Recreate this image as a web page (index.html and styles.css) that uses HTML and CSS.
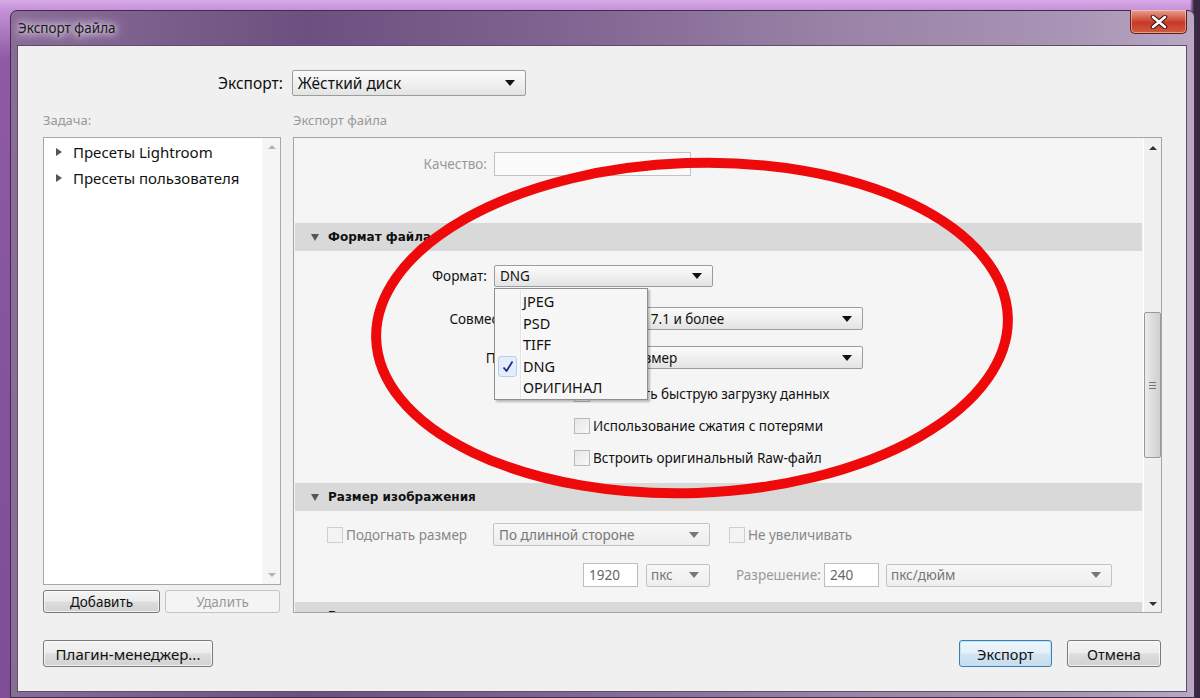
FILE: index.html
```html
<!DOCTYPE html>
<html lang="ru">
<head>
<meta charset="utf-8">
<title>Экспорт файла</title>
<link rel="stylesheet" href="styles.css">
</head>
<body>
<div class="desktop">
  <div class="window">
    <div class="titlebar">
      <span class="title">Экспорт файла</span>
      <div class="close">
        <svg width="20" height="14" viewBox="0 0 20 14"><path d="M4 2 L16 12 M16 2 L4 12" stroke="#3a1010" stroke-width="4.5" stroke-linecap="round"/><path d="M4 2 L16 12 M16 2 L4 12" stroke="#fff" stroke-width="2.6" stroke-linecap="round"/></svg>
      </div>
    </div>
    <div class="client">
      <div class="export-row">
        <span class="export-label">Экспорт:</span>
        <div class="select select-big"><span>Жёсткий диск</span><i class="caret"></i></div>
      </div>
      <div class="main">
        <div class="col-left">
          <div class="cap">Задача:</div>
          <div class="listbox">
            <ul class="tree">
              <li><i class="tri-right"></i>Пресеты Lightroom</li>
              <li><i class="tri-right"></i>Пресеты пользователя</li>
            </ul>
            <div class="vscroll vscroll-light">
              <i class="arr-up"></i>
              <i class="arr-down"></i>
            </div>
          </div>
          <div class="btn-row">
            <button class="btn btn-add">Добавить</button>
            <button class="btn btn-del" disabled>Удалить</button>
          </div>
        </div>
        <div class="col-right">
          <div class="cap">Экспорт файла</div>
          <div class="panel">
            <div class="panel-content">
              <div class="frow row-quality">
                <span class="flabel w192 dim">Качество:</span>
                <div class="input input-quality"></div>
              </div>
              <div class="band band-1"><i class="tri-down"></i>Формат файла</div>
              <div class="frow row-format">
                <span class="flabel w192">Формат:</span>
                <div class="select-wrap">
                  <div class="select select-format"><span>DNG</span><i class="caret"></i></div>
                  <div class="popup">
                    <div class="popup-gutter"></div>
                    <div class="pitem">JPEG</div>
                    <div class="pitem">PSD</div>
                    <div class="pitem">TIFF</div>
                    <div class="pitem checked">
                      <span class="checkbox-mark"><svg width="12" height="13" viewBox="0 0 12 13"><path d="M1.5 7.5 L4.5 11 L10.5 1.5" fill="none" stroke="#1e2a8c" stroke-width="1.8" stroke-linejoin="round"/></svg></span>DNG
                    </div>
                    <div class="pitem">ОРИГИНАЛ</div>
                  </div>
                </div>
              </div>
              <div class="frow row-compat">
                <span class="flabel w261">Совместимость:</span>
                <div class="select select-wide"><span>Camera Raw 7.1 и более</span><i class="caret"></i></div>
              </div>
              <div class="frow row-preview">
                <span class="flabel w261">Просмотр:</span>
                <div class="select select-wide"><span>Средний размер</span><i class="caret"></i></div>
              </div>
              <div class="checks">
                <label class="chk"><i class="box"></i>Включить быструю загрузку данных</label>
                <label class="chk"><i class="box"></i>Использование сжатия с потерями</label>
                <label class="chk"><i class="box"></i>Встроить оригинальный Raw-файл</label>
              </div>
              <div class="band band-2"><i class="tri-down"></i>Размер изображения</div>
              <div class="size-row1">
                <label class="chk chk-dim chk-fit"><i class="box"></i>Подогнать размер</label>
                <div class="select select-dis select-side"><span>По длинной стороне</span><i class="caret"></i></div>
                <label class="chk chk-dim chk-noup"><i class="box"></i>Не увеличивать</label>
              </div>
              <div class="size-row2">
                <div class="input input-num in-1920">1920</div>
                <div class="select select-dis select-px"><span>пкс</span><i class="caret"></i></div>
                <span class="res-label">Разрешение:</span>
                <div class="input input-num in-240">240</div>
                <div class="select select-dis select-ppi"><span>пкс/дюйм</span><i class="caret"></i></div>
              </div>
              <div class="band band-3"><i class="tri-down"></i>Р</div>
            </div>
            <div class="vscroll vscroll-main">
              <i class="arr-up dark"></i>
              <div class="thumb"><span class="grip"></span></div>
              <i class="arr-down dark"></i>
            </div>
          </div>
        </div>
      </div>
      <div class="footer">
        <button class="btn btn-plugin">Плагин-менеджер...</button>
        <div class="spacer"></div>
        <button class="btn btn-default">Экспорт</button>
        <button class="btn btn-cancel">Отмена</button>
      </div>
    </div>
  </div>
</div>
<svg class="annot" width="1200" height="698" viewBox="0 0 1200 698">
  <ellipse cx="692" cy="328" rx="316" ry="165" fill="none" stroke="#ee0a0a" stroke-width="10" transform="rotate(-2 692 328)"/>
</svg>
</body>
</html>
```
FILE: styles.css
```css
* { box-sizing: border-box; }
html, body { margin: 0; padding: 0; }
body {
  width: 1200px;
  height: 698px;
  overflow: hidden;
  position: relative;
  font-family: "Noto Sans", "Open Sans", sans-serif;
  font-size: 13px;
  color: #000;
}
.desktop {
  width: 1200px;
  height: 698px;
  padding: 10px 5px 0 10px;
  background:
    linear-gradient(90deg, rgba(0,0,0,0) 0, rgba(0,0,0,0) 1190px, #3a2843 1194px, #3a2843 1200px),
    linear-gradient(180deg, #d9a9e8 0, #c592d9 10px, #8d5aa3 60px, #7e4d95 100%);
}
.window {
  width: 1185px;
  height: 688px;
  border: 1px solid #3d2f45;
  border-radius: 7px 7px 0 0;
  background: linear-gradient(90deg, #8a6c98 0, #6e5080 25%, #7f6290 45%, #9a83a6 70%, #a995b5 90%, #b9a7c4 100%);
  padding: 0 7px 5px 6px;
  display: flex;
  flex-direction: column;
  position: relative;
}
.titlebar {
  height: 34px;
  display: flex;
  align-items: flex-start;
  position: relative;
}
.title {
  margin-top: 8px;
  margin-left: 0;
  font-family: "Noto Sans", sans-serif;
  font-size: 13.5px;
  color: #1a1a1a;
  padding: 0 6px 0 1px;
  text-shadow: 0 0 6px rgba(240,232,245,0.95), 0 0 10px rgba(240,232,245,0.9), 0 0 14px rgba(240,232,245,0.8);
}
.close {
  position: absolute;
  right: 0;
  top: -1px;
  width: 57px;
  height: 24px;
  border: 1px solid #5a2020;
  border-top: none;
  border-radius: 0 0 5px 5px;
  background: linear-gradient(180deg, #e8a090 0, #d5604c 35%, #c43a28 55%, #d55a3e 100%);
  display: flex;
  align-items: center;
  justify-content: center;
  box-shadow: inset 0 0 0 1px rgba(255,220,210,0.5);
}
.client {
  flex: 1;
  background: #f0f0f0;
  border: 1px solid #5e4d66;
  display: flex;
  flex-direction: column;
  padding: 24px 24px 0 25px;
}
.export-row {
  display: flex;
  align-items: center;
  height: 26px;
  padding-left: 175px;
  gap: 9px;
}
.export-label {
  font-size: 15.5px;
  color: #111;
}
.select {
  display: flex;
  align-items: center;
  justify-content: space-between;
  border: 1px solid #9c9c9c;
  border-radius: 2px;
  background: linear-gradient(180deg, #fbfbfb 0, #f0f0f0 50%, #e3e3e3 100%);
  padding: 0 10px 0 5px;
  font-size: 13.5px;
  color: #111;
}
.select-big {
  width: 234px;
  height: 26px;
  font-size: 15.5px;
}
.caret {
  width: 0;
  height: 0;
  border-left: 5px solid transparent;
  border-right: 5px solid transparent;
  border-top: 6px solid #111;
}
.main {
  display: flex;
  gap: 12px;
  margin-top: 15px;
}
.cap {
  height: 18px;
  line-height: 18px;
  margin-bottom: 8px;
  color: #999;
  font-size: 13px;
}
.col-left {
  width: 239px;
  display: flex;
  flex-direction: column;
}
.listbox {
  height: 448px;
  border: 1px solid #a8a8a8;
  background: #fff;
  display: flex;
  position: relative;
}
.tree {
  list-style: none;
  margin: 0;
  padding: 1px 0 0 12px;
  flex: 1;
}
.tree li {
  height: 26px;
  line-height: 26px;
  font-size: 15px;
  display: flex;
  align-items: center;
  color: #111;
}
.tri-right {
  width: 0;
  height: 0;
  border-top: 4px solid transparent;
  border-bottom: 4px solid transparent;
  border-left: 6px solid #555;
  margin-right: 11px;
}
.vscroll {
  width: 18px;
  display: flex;
  flex-direction: column;
  justify-content: space-between;
  align-items: center;
  padding: 7px 0;
}
.vscroll-light {
  background: #f5f5f5;
  border-left: 1px solid #f8f8f8;
}
.arr-up, .arr-down {
  width: 0;
  height: 0;
  border-left: 4px solid transparent;
  border-right: 4px solid transparent;
}
.arr-up { border-bottom: 4px solid #b4b4b4; }
.arr-down { border-top: 4px solid #b4b4b4; }
.arr-up.dark { border-bottom-color: #333; }
.arr-down.dark { border-top-color: #333; }
.btn-row {
  display: flex;
  gap: 5px;
  margin-top: 5px;
}
.btn {
  font-family: "Noto Sans", sans-serif;
  font-size: 13.5px;
  color: #111;
  height: 23px;
  padding: 0;
  border: 1px solid #7a7a7a;
  border-radius: 3px;
  background: linear-gradient(180deg, #f4f4f4 0, #ececec 48%, #dddddd 52%, #d2d2d2 100%);
  box-shadow: inset 0 0 0 1px rgba(255,255,255,0.7);
}
.btn-add { width: 117px; }
.btn-del {
  width: 115px;
  color: #9a9a9a;
  border-color: #c4c4c4;
  background: #f4f4f4;
  box-shadow: none;
}
.col-right {
  width: 869px;
  display: flex;
  flex-direction: column;
}
.panel {
  height: 476px;
  border: 1px solid #a4a4a4;
  background: #f5f5f5;
  display: flex;
  overflow: hidden;
}
.panel-content {
  width: 849px;
  padding: 14px 0 0 1px;
  position: relative;
}
.frow {
  display: flex;
  align-items: center;
  gap: 7px;
}
.flabel {
  text-align: right;
  font-size: 13.5px;
  color: #111;
  flex: none;
}
.flabel.dim { color: #999; }
.w192 { width: 192px; }
.w261 { width: 260px; }
.row-quality { height: 24px; }
.input {
  border: 1px solid #c2c2c2;
  background: #fafafa;
  height: 24px;
}
.input-quality { width: 197px; }
.band {
  background: #d9d9d9;
  height: 28px;
  margin-right: 1px;
  display: flex;
  align-items: center;
  padding-left: 16px;
  font-family: "DejaVu Sans", sans-serif;
  font-weight: bold;
  font-size: 12px;
  color: #111;
}
.tri-down {
  width: 0;
  height: 0;
  border-left: 4px solid transparent;
  border-right: 4px solid transparent;
  border-top: 7px solid #555;
  margin-right: 9px;
}
.band-1 { margin-top: 47px; }
.row-format { margin-top: 14px; height: 22px; }
.select-wrap { position: relative; }
.select-format { width: 219px; height: 22px; }
.popup {
  position: absolute;
  left: 0;
  top: 23px;
  width: 154px;
  height: 112px;
  background: #f7f7f7;
  border: 1px solid #8f8f8f;
  box-shadow: 2px 2px 2px rgba(0,0,0,0.25);
  padding: 2px 0 0 0;
  z-index: 5;
}
.popup-gutter {
  position: absolute;
  left: 25px;
  top: 1px;
  bottom: 1px;
  width: 2px;
  border-left: 1px solid #e2e2e2;
  border-right: 1px solid #ffffff;
}
.pitem {
  height: 21.5px;
  line-height: 21.5px;
  padding-left: 28px;
  font-size: 14.5px;
  color: #111;
  position: relative;
}
.checkbox-mark {
  position: absolute;
  left: 3px;
  top: 0px;
  width: 19px;
  height: 21px;
  border: 1px solid #b6cdeb;
  border-radius: 3px;
  background: #e4eefb;
  display: flex;
  align-items: center;
  justify-content: center;
}
.row-compat { margin-top: 20px; height: 23px; }
.row-preview { margin-top: 16px; height: 23px; }
.select-wide { width: 301px; height: 23px; }
.checks {
  display: flex;
  flex-direction: column;
  gap: 16px;
  margin-top: 17px;
  padding-left: 279px;
}
.chk {
  display: flex;
  align-items: center;
  height: 16px;
  font-size: 13.5px;
  color: #111;
}
.box {
  width: 16px;
  height: 16px;
  border: 1px solid #b9b9b9;
  background: linear-gradient(135deg, #e6e6e6, #f8f8f8);
  margin-right: 3px;
  flex: none;
}
.band-2 { margin-top: 17px; }
.size-row1 {
  display: flex;
  align-items: center;
  height: 23px;
  margin-top: 12px;
  padding-left: 32px;
}
.chk-dim { color: #888; }
.chk-dim .box { border-color: #cfcfcf; background: #f3f3f3; }
.chk-fit { width: 166px; }
.select-dis {
  border-color: #c3c3c3;
  background: linear-gradient(180deg, #f7f7f7, #eeeeee);
  color: #777;
}
.select-dis .caret { border-top-color: #777; }
.select-side { width: 217px; height: 23px; }
.chk-noup { margin-left: 19px; }
.size-row2 {
  display: flex;
  align-items: center;
  height: 24px;
  margin-top: 17px;
  padding-left: 288px;
}
.input-num {
  background: #fff;
  border-color: #bdbdbd;
  color: #666;
  font-size: 13.5px;
  line-height: 22px;
  padding-left: 5px;
  width: 55px;
}
.select-px { width: 64px; height: 23px; margin-left: 8px; padding-left: 4px; }
.res-label { color: #999; font-size: 13.5px; margin-left: 26px; width: 88px; }
.in-240 { margin-left: 0; }
.select-ppi { width: 226px; height: 23px; margin-left: 7px; padding-left: 4px; }
.band-3 { margin-top: 15px; }
.vscroll-main {
  width: 18px;
  position: relative;
  background: #f0f0f0;
  border-left: 1px solid #ffffff;
  padding: 8px 0 6px;
}
.thumb {
  position: absolute;
  left: 0;
  top: 174px;
  width: 17px;
  height: 146px;
  border: 1px solid #9a9a9a;
  border-radius: 2px;
  background: linear-gradient(90deg, #ececec, #dcdcdc 50%, #d0d0d0);
  display: flex;
  align-items: center;
  justify-content: center;
}
.grip {
  width: 7px;
  height: 7px;
  border-top: 1px solid #777;
  border-bottom: 1px solid #777;
  position: relative;
}
.grip::after {
  content: "";
  position: absolute;
  left: 0;
  right: 0;
  top: 2px;
  border-top: 1px solid #777;
}
.footer {
  display: flex;
  align-items: center;
  gap: 15px;
  margin-top: 27px;
  padding-right: 1px;
}
.spacer { flex: 1; }
.btn-plugin { width: 170px; height: 27px; font-size: 15px; }
.btn-default {
  width: 93px;
  height: 27px;
  font-size: 14.5px;
  border-color: #3c7fb1;
  box-shadow: inset 0 0 0 1px #bfe3f8;
  background: linear-gradient(180deg, #eef6fb 0, #e4eff8 48%, #d2e5f3 52%, #c7dced 100%);
}
.btn-cancel { width: 94px; height: 27px; font-size: 14.5px; }
.annot {
  position: absolute;
  left: 0;
  top: 0;
  pointer-events: none;
}
```
